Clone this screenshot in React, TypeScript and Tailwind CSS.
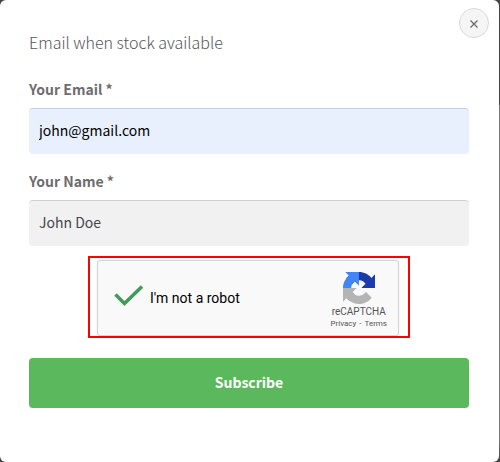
import { useState, FormEvent } from "react";

function RecaptchaLogo() {
    return (
        <svg viewBox="0 0 64 64" className="h-8 w-8" aria-hidden="true">
            <path
                fill="#1c3aa9"
                d="M64 31.955l-.017-1.374V4.687l-7.160 7.160C50.963 4.674 42.049.093 32.060.093c-10.389 0-19.622 4.960-25.458 12.640l11.736 11.860a15.550 15.550 0 0 1 4.754-5.337c2.050-1.600 4.952-2.906 8.968-2.906.485 0 .86.057 1.135.163 4.976.393 9.288 3.139 11.828 7.125l-8.307 8.307 27.284.01"
            />
            <path
                fill="#4285f4"
                d="M31.862.094l-1.372.016H4.594l7.160 7.160C4.581 13.130 0 22.044 0 32.033c0 10.389 4.960 19.622 12.640 25.458L24.500 45.755a15.550 15.550 0 0 1-5.337-4.754c-1.600-2.050-2.906-4.952-2.906-8.968 0-.485.057-.86.163-1.135.393-4.976 3.139-9.288 7.125-11.828l8.307 8.307.01-27.284"
            />
            <path
                fill="#b4b4b4"
                d="M0 32.033l.016 1.374v25.896l7.160-7.160c5.860 7.173 14.774 11.754 24.763 11.754 10.389 0 19.622-4.960 25.458-12.640L45.661 39.397a15.550 15.550 0 0 1-4.754 5.337c-2.050 1.600-4.952 2.906-8.968 2.906-.485 0-.86-.057-1.135-.163-4.976-.393-9.288-3.139-11.828-7.125l8.307-8.307-27.284-.012"
            />
        </svg>
    );
}

function Recaptcha() {
    return (
        <div className="mx-auto mt-[10px] max-w-full border-2 border-[#fe0000] pt-0.5 pr-[9px] pl-[7px]">
            <div className="flex h-[76px] w-[302px] max-w-full items-center justify-between rounded-[3px] border border-[#d3d3d3] bg-[#f9f9f9] pr-[11px] pl-4 font-[Roboto,sans-serif] shadow-[0_0_3px_rgba(0,0,0,0.08)]">
                <label className="flex items-center gap-1.5 text-sm text-black">
                    <input type="checkbox" defaultChecked className="peer sr-only" />
                    <svg
                        viewBox="0 0 30 26"
                        className="invisible h-[26px] w-[30px] peer-checked:visible"
                        fill="none"
                        stroke="#439a5b"
                        strokeWidth="3.5"
                        aria-hidden="true"
                    >
                        <path d="M1.500 9.500L10.500 18.500L28 1.500" />
                    </svg>
                    I'm not a robot
                </label>
                <div className="flex flex-col items-center pt-1.5 text-[#555]">
                    <RecaptchaLogo />
                    <span className="mt-0.5 text-[10px] leading-3">reCAPTCHA</span>
                    <div className="flex gap-[3px] text-[8px] leading-3">
                        <a href="#privacy">Privacy</a>
                        <span>-</span>
                        <a href="#terms">Terms</a>
                    </div>
                </div>
            </div>
        </div>
    );
}

export default function App() {
    const [email, setEmail] = useState("john@gmail.com");
    const [name, setName] = useState("John Doe");

    const handleSubmit = (e: FormEvent) => {
        e.preventDefault();
        console.log({ email, name });
    };

    return (
        <main className="min-h-screen bg-[linear-gradient(#444_0_105px,#777_105px_95%,#444)] pr-px font-['Noto_Sans_CJK_SC',sans-serif] text-[#6d6d6d]">
            <form
                onSubmit={handleSubmit}
                className="relative flex min-h-screen flex-col rounded-md bg-white pt-7 pr-[30px] pb-8 pl-[29px]"
            >
                <button
                    type="button"
                    aria-label="Close"
                    className="absolute top-2 right-[10px] flex h-[30px] w-[30px] items-center justify-center rounded-full border border-[#d8d8d8] bg-[#f5f5f5] text-[#666]"
                >
                    <svg viewBox="0 0 8 8" className="mt-0.5 h-2 w-2" fill="none" stroke="currentColor" strokeWidth="1.200" aria-hidden="true">
                        <path d="M.5.5L7.500 7.500M7.500.5L.5 7.500" />
                    </svg>
                </button>

                <h1 className="text-base leading-7 font-light text-[#555]">Email when stock available</h1>

                <label htmlFor="email" className="mt-[21px] text-sm leading-6 font-bold">
                    Your Email *
                </label>
                <input
                    id="email"
                    type="email"
                    value={email}
                    onChange={(e) => setEmail(e.target.value)}
                    className="mt-[7px] h-[46px] w-full rounded border-t border-[#c5cede] bg-[#e8f0fe] px-[10px] pb-1 text-sm text-black outline-none"
                />

                <label htmlFor="name" className="mt-[15px] text-sm leading-6 font-bold">
                    Your Name *
                </label>
                <input
                    id="name"
                    type="text"
                    value={name}
                    onChange={(e) => setName(e.target.value)}
                    className="mt-[7px] h-[46px] w-full rounded border-t border-[#d0d0d0] bg-[#f1f1f1] px-[10px] pb-1 text-sm text-[#43454b] outline-none"
                />

                <Recaptcha />

                <button type="submit" className="mt-5 h-[50px] w-full rounded bg-[#5cb85c] pb-0.5 text-sm font-bold text-white">
                    Subscribe
                </button>
            </form>
        </main>
    );
}
